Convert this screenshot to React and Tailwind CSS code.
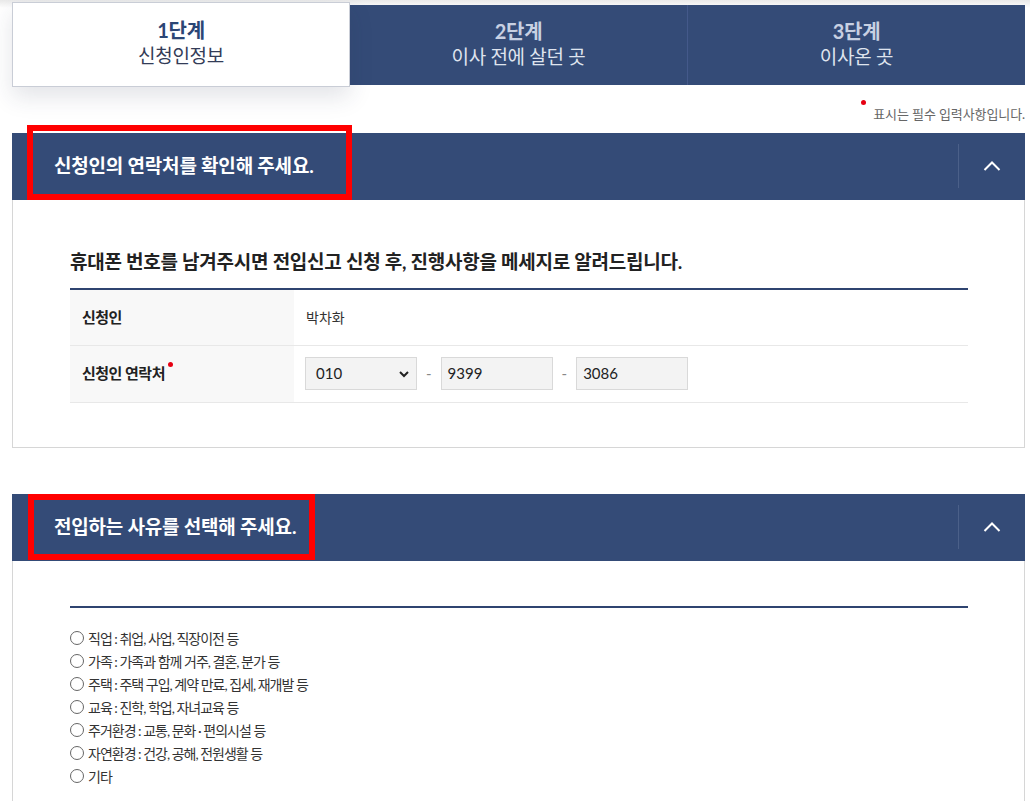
import { useState } from "react";

const steps = [
  { no: "1단계", label: "신청인정보" },
  { no: "2단계", label: "이사 전에 살던 곳" },
  { no: "3단계", label: "이사온 곳" },
];

const reasons = [
  "직업 : 취업, 사업, 직장이전 등",
  "가족 : 가족과 함께 거주, 결혼, 분가 등",
  "주택 : 주택 구입, 계약 만료, 집세, 재개발 등",
  "교육 : 진학, 학업, 자녀교육 등",
  "주거환경 : 교통, 문화 · 편의시설 등",
  "자연환경 : 건강, 공해, 전원생활 등",
  "기타",
];

const font = { fontFamily: 'Lato, "Noto Sans CJK KR", sans-serif' };

const ChevronUp = () => (
  <svg width="18" height="10" viewBox="0 0 18 10" fill="none">
    <path d="M1.5 9L9 1.5L16.5 9" stroke="#fff" strokeWidth="2" />
  </svg>
);

const SectionHeader = ({ title, box }) => (
  <div className="relative flex h-[67px] items-center bg-[#344b77]">
    <h2 className="pl-[42px] text-[19px] font-bold tracking-[-0.2px] text-white">{title}</h2>
    <div className="ml-auto flex h-[44px] w-[67px] items-center justify-center border-l border-[#4b6089]">
      <ChevronUp />
    </div>
    {/* red annotation box */}
    <div className={`absolute border-[6px] border-[#ff0000] ${box}`} />
  </div>
);

const Radio = () => (
  <span className="inline-block h-[14px] w-[14px] shrink-0 rounded-full border-[1.5px] border-[#666] bg-white" />
);

export default function App() {
  const [reason, setReason] = useState(null);

  return (
    <div className="relative w-[1030px] bg-white pb-10" style={font}>
      <div className="absolute inset-x-0 top-0 h-[8px] bg-gradient-to-b from-[#e9e9e9] to-white" />

      {/* step tabs */}
      <div className="relative ml-[12px] flex w-[1013px] items-start">
        {steps.map((s, i) =>
          i === 0 ? (
            <div
              key={s.no}
              className="relative z-10 mt-[2px] flex h-[85px] w-[338px] flex-col items-center justify-center border border-[#c9cdd6] bg-white shadow-[0_10px_22px_rgba(40,50,80,0.13)]"
            >
              <div className="-mt-[3px] text-[20px] font-bold leading-[26px] tracking-[-0.3px] text-[#2b4675]">{s.no}</div>
              <div className="text-[19px] leading-[26px] tracking-[-0.3px] text-[#333c57]">{s.label}</div>
            </div>
          ) : (
            <div
              key={s.no}
              className={`mt-[5px] flex h-[80px] flex-1 flex-col items-center justify-center bg-[#344b77] ${
                i === 2 ? "border-l border-[#44598a]" : ""
              }`}
            >
              <div className="-mt-[3px] text-[20px] font-bold leading-[26px] tracking-[-0.3px] text-[#c8d0e2]">{s.no}</div>
              <div className="text-[19px] leading-[26px] tracking-[-0.3px] text-[#dfe4ee]">{s.label}</div>
            </div>
          )
        )}
      </div>

      <p className="mt-[18px] flex justify-end pr-[5px] text-[13px] tracking-[-0.1px] text-[#666]">
        <span className="relative mr-[7px] -top-[5px] h-[5px] w-[5px] rounded-full bg-[#e60012]" />
        표시는 필수 입력사항입니다.
      </p>

      {/* section 1 */}
      <section className="ml-[12px] mt-[8px] w-[1013px]">
        <SectionHeader title="신청인의 연락처를 확인해 주세요." box="left-[15px] -top-[8px] h-[75px] w-[325px]" />
        <div className="border border-t-0 border-[#d6d6d6] px-[57px] pb-[44px] pt-[48px]">
          <h3 className="text-[19px] font-bold leading-[28px] tracking-[-0.25px] text-[#222]">
            휴대폰 번호를 남겨주시면 전입신고 신청 후, 진행사항을 메세지로 알려드립니다.
          </h3>
          <div className="mt-[12px] w-[898px] border-t-2 border-[#2f4470]">
            <div className="flex h-[56px] border-b border-[#e8e8e8]">
              <div className="flex w-[224px] items-center bg-[#f8f8f8] pl-[12px] text-[15px] font-bold tracking-[-0.5px] text-[#222]">
                신청인
              </div>
              <div className="flex items-center pl-[12px] text-[14px] text-[#333]">박차화</div>
            </div>
            <div className="flex h-[57px] border-b border-[#e8e8e8]">
              <div className="flex w-[224px] items-center bg-[#f8f8f8] pl-[12px] text-[15px] font-bold tracking-[-0.5px] text-[#222]">
                신청인 연락처
                <span className="relative -top-[9px] ml-[3px] h-[5px] w-[5px] rounded-full bg-[#e60012]" />
              </div>
              <div className="flex items-center gap-[9px] pl-[11px] text-[15px] text-[#222]">
                <div className="flex h-[33px] w-[112px] items-center justify-between border border-[#d9d9d9] bg-[#f3f3f3] pl-[10px] pr-[6px]">
                  <span>010</span>
                  <svg width="12" height="8" viewBox="0 0 12 8" fill="none">
                    <path d="M2 2l4 4 4-4" stroke="#222" strokeWidth="2" />
                  </svg>
                </div>
                <span className="text-[#888]">-</span>
                <div className="flex h-[33px] w-[112px] items-center border border-[#d9d9d9] bg-[#f3f3f3] pl-[6px]">9399</div>
                <span className="text-[#888]">-</span>
                <div className="flex h-[33px] w-[112px] items-center border border-[#d9d9d9] bg-[#f3f3f3] pl-[6px]">3086</div>
              </div>
            </div>
          </div>
        </div>
      </section>

      {/* section 2 */}
      <section className="ml-[12px] mt-[46px] w-[1013px]">
        <SectionHeader title="전입하는 사유를 선택해 주세요." box="left-[16px] top-0 h-[66px] w-[287px]" />
        <div className="border border-t-0 border-[#d6d6d6] px-[57px] pb-[20px] pt-[45px]">
          <div className="w-[898px] border-t-2 border-[#2f4470]" />
          <ul className="mt-[19px]">
            {reasons.map((r, i) => (
              <li
                key={r}
                onClick={() => setReason(i)}
                className="flex h-[23px] items-center gap-[4px] text-[14px] tracking-[-1px] text-[#333]"
              >
                <Radio checked={reason === i} />
                {r}
              </li>
            ))}
          </ul>
        </div>
      </section>
    </div>
  );
}
